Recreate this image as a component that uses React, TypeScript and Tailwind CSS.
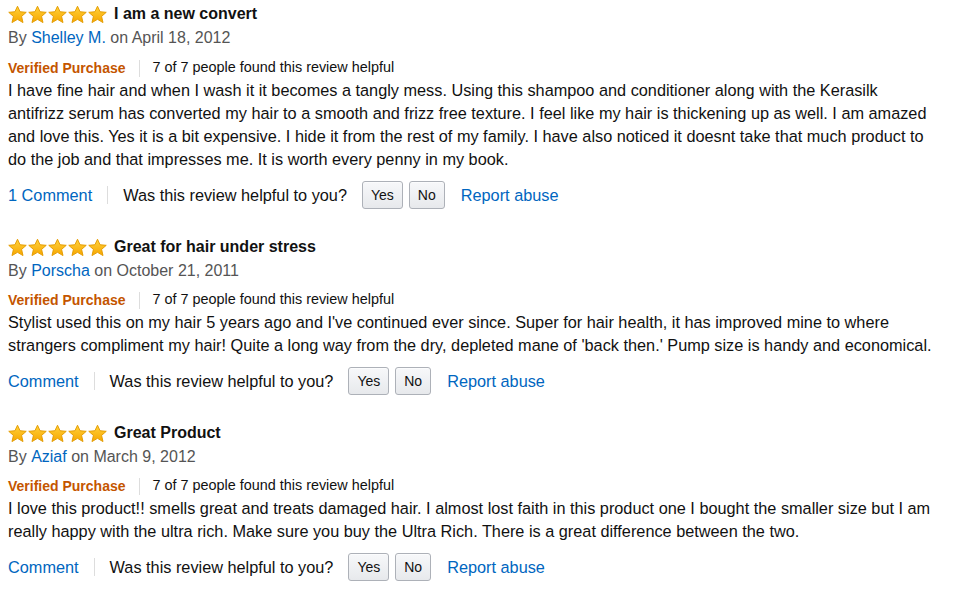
const REVIEWS = [
  {
    title: 'I am a new convert',
    author: 'Shelley M.',
    date: 'April 18, 2012',
    body: 'I have fine hair and when I wash it it becomes a tangly mess. Using this shampoo and conditioner along with the Kerasilk antifrizz serum has converted my hair to a smooth and frizz free texture. I feel like my hair is thickening up as well. I am amazed and love this. Yes it is a bit expensive. I hide it from the rest of my family. I have also noticed it doesnt take that much product to do the job and that impresses me. It is worth every penny in my book.',
    comments: '1 Comment',
  },
  {
    title: 'Great for hair under stress',
    author: 'Porscha',
    date: 'October 21, 2011',
    body: "Stylist used this on my hair 5 years ago and I've continued ever since. Super for hair health, it has improved mine to where strangers compliment my hair! Quite a long way from the dry, depleted mane of 'back then.' Pump size is handy and economical.",
    comments: 'Comment',
  },
  {
    title: 'Great Product',
    author: 'Aziaf',
    date: 'March 9, 2012',
    body: 'I love this product!! smells great and treats damaged hair. I almost lost faith in this product one I bought the smaller size but I am really happy with the ultra rich. Make sure you buy the Ultra Rich. There is a great difference between the two.',
    comments: 'Comment',
  },
]

function Star() {
  return (
    <svg width="19" height="19" viewBox="0 0 20 19">
      <defs>
        <linearGradient id="sg" x1="0" y1="0" x2="0" y2="1">
          <stop offset="0" stopColor="#ffd23a" />
          <stop offset="1" stopColor="#f7a600" />
        </linearGradient>
      </defs>
      <polygon
        points="10,0.8 12.7,6.6 19.2,7.2 14.3,11.5 15.8,18 10,14.6 4.2,18 5.7,11.5 0.8,7.2 7.3,6.6"
        fill="url(#sg)"
        stroke="#e39b00"
        strokeWidth="1"
        strokeLinejoin="round"
      />
    </svg>
  )
}

function VoteButton({ label }: { label: string }) {
  return (
    <button className="h-[28px] px-[8px] rounded-[3px] border border-[#adb1b8] bg-gradient-to-b from-[#f7f8fa] to-[#e7e9ec] text-[14px] text-[#111] shadow-[0_1px_0_rgba(255,255,255,0.6)_inset]">
      {label}
    </button>
  )
}

function Review(props: { r: (typeof REVIEWS)[number]; first: boolean }) {
  const { r, first } = props
  return (
    <div className={first ? '' : 'mt-[26px]'}>
      <div className="h-[24px] flex items-center">
        <div className="flex items-center gap-px">
          <Star /><Star /><Star /><Star /><Star />
        </div>
        <span className="ml-[7px] font-bold text-[16px] text-[#111]">{r.title}</span>
      </div>
      <div className="h-[24px] flex items-center text-[16px] text-[#555]">
        By&nbsp;<a className="text-[#0066c0]">{r.author}</a>&nbsp;on {r.date}
      </div>
      <div className={(first ? 'mt-[7px]' : 'mt-[6px]') + ' h-[22px] flex items-center text-[14.4px]'}>
        <span className="font-bold text-[#c45500] text-[14px]">Verified Purchase</span>
        <span className="mx-[13px] h-[17px] w-px bg-[#ddd]" />
        <span className="text-[#111]">7 of 7 people found this review helpful</span>
      </div>
      <p className="w-[928px] text-[16.3px] leading-[23px] text-[#111]">{r.body}</p>
      <div className="mt-[10px] h-[28px] flex items-center text-[16.3px]">
        <a className="text-[#0066c0]">{r.comments}</a>
        <span className="mx-[15px] h-[18px] w-px bg-[#ddd]" />
        <span className="text-[#111]">Was this review helpful to you?</span>
        <div className="ml-[15px] flex gap-[6px]">
          <VoteButton label="Yes" />
          <VoteButton label="No" />
        </div>
        <a className="ml-[16px] text-[#0066c0]">Report abuse</a>
      </div>
    </div>
  )
}

export default function App() {
  return (
    <div className="min-h-[596px] bg-white pl-[8px] pt-[2px]" style={{ fontFamily: '"Liberation Sans", Arial, sans-serif' }}>
      {REVIEWS.map((r, i) => (
        <Review key={i} r={r} first={i === 0} />
      ))}
    </div>
  )
}
